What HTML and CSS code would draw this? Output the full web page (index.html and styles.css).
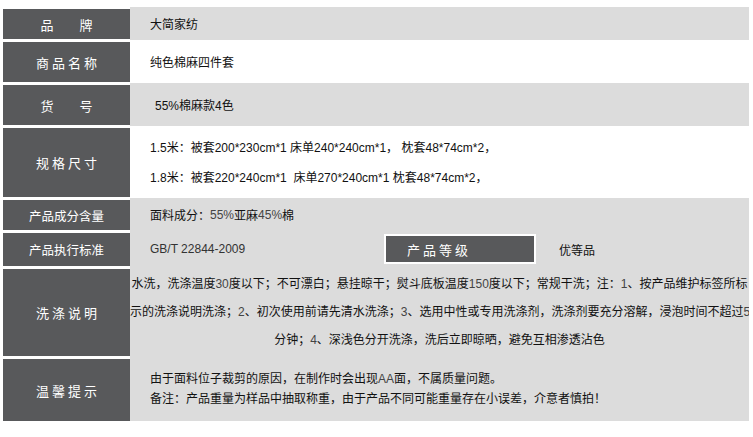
FILE: index.html
```html
<!DOCTYPE html>
<html>
<head>
  <link rel="stylesheet" href="styles.css">
</head>
<body>
  <div class="spec">
    <div class="spec-row r1">
      <div class="label"><span class="wide">品牌</span></div>
      <div class="value gray">大简家纺</div>
    </div>
    <div class="spec-row r2">
      <div class="label"><span>商品名称</span></div>
      <div class="value">纯色棉麻四件套</div>
    </div>
    <div class="spec-row r3">
      <div class="label"><span class="wide">货号</span></div>
      <div class="value gray indent">55%棉麻款4色</div>
    </div>
    <div class="spec-row r4">
      <div class="label"><span>规格尺寸</span></div>
      <div class="value lines">
        <div>1.5米：被套200*230cm*1 床单240*240cm*1， 枕套48*74cm*2，</div>
        <div>1.8米：被套220*240cm*1&nbsp; 床单270*240cm*1 枕套48*74cm*2，</div>
      </div>
    </div>
    <div class="spec-row r5">
      <div class="label"><span class="tight">产品成分含量</span></div>
      <div class="value gray">面料成分：<em>55%</em>亚麻<em>45%</em>棉</div>
    </div>
    <div class="spec-row r6">
      <div class="label"><span class="tight">产品执行标准</span></div>
      <div class="value gray">
        <span class="standard">GB/T 22844-2009</span>
        <span class="grade">产品等级</span>
        <span class="grade-value">优等品</span>
      </div>
    </div>
    <div class="spec-row r7">
      <div class="label"><span>洗涤说明</span></div>
      <div class="value gray wash">
        <div>水洗，洗涤温度<em>30</em>度以下；不可漂白；悬挂晾干；熨斗底板温度<em>150</em>度以下；常规干洗；注：<em>1</em>、按产品维护标签所标</div>
        <div>示的洗涤说明洗涤；<em>2</em>、初次使用前请先清水洗涤；<em>3</em>、选用中性或专用洗涤剂，洗涤剂要充分溶解，浸泡时间不超过<em>5</em></div>
        <div>分钟；<em>4</em>、深浅色分开洗涤，洗后立即晾晒，避免互相渗透沾色</div>
      </div>
    </div>
    <div class="spec-row r8">
      <div class="label"><span>温馨提示</span></div>
      <div class="value gray notes">
        <div>由于面料位子裁剪的原因，在制作时会出现<em>AA</em>面，不属质量问题。</div>
        <div>备注：产品重量为样品中抽取称重，由于产品不同可能重量存在小误差，介意者慎拍！</div>
      </div>
    </div>
  </div>
</body>
</html>
```

FILE: styles.css
```css
body {
  margin: 0;
  background: #fff;
  font-family: "Liberation Sans", "Noto Sans CJK SC", sans-serif;
  font-size: 12px;
  color: #111;
}
.spec {
  width: 749px;
  padding-top: 7px;
}
.spec-row {
  display: flex;
}
.r1 { height: 33px; }
.r2 { height: 43px; }
.r3 { height: 43px; }
.r4 { height: 72px; }
.r5 { height: 33px; }
.r6 { height: 36px; }
.r7 { height: 90px; }
.r8 { height: 64px; }

.label {
  width: 127px;
  flex: none;
  margin: 2px 0 1px 3px;
  background: #58595b;
  color: #fff;
  font-size: 13px;
  display: flex;
  align-items: center;
  justify-content: center;
}
.r8 .label {
  margin-bottom: 0;
}
.label span {
  letter-spacing: 3px;
  margin-right: -3px;
}
.label span.wide {
  letter-spacing: 26px;
  margin-right: -26px;
}
.label span.tight {
  letter-spacing: 0;
  margin-right: 0;
  font-size: 12.5px;
}

.value {
  flex: 1;
  display: flex;
  align-items: center;
  padding-left: 20px;
  white-space: nowrap;
  overflow: hidden;
}
.value.gray {
  background: #dcdcdc;
}
.value.indent {
  padding-left: 25px;
}
.value em {
  font-style: normal;
  color: #444;
}
.lines {
  flex-direction: column;
  align-items: flex-start;
  justify-content: center;
  line-height: 30px;
  padding-top: 2px;
}

.standard {
  width: 234px;
  color: #333;
}
.grade {
  width: 127px;
  height: 26px;
  padding-left: 21px;
  border: 2px solid #fff;
  background: #58595b;
  color: #fff;
  font-size: 13px;
  letter-spacing: 3px;
  display: flex;
  align-items: center;
}
.grade-value {
  margin-left: 23px;
}

.wash {
  flex-direction: column;
  justify-content: center;
  align-items: stretch;
  padding-left: 0;
  text-align: center;
  line-height: 28px;
}
.notes {
  flex-direction: column;
  align-items: flex-start;
  justify-content: center;
  line-height: 20px;
}
```
